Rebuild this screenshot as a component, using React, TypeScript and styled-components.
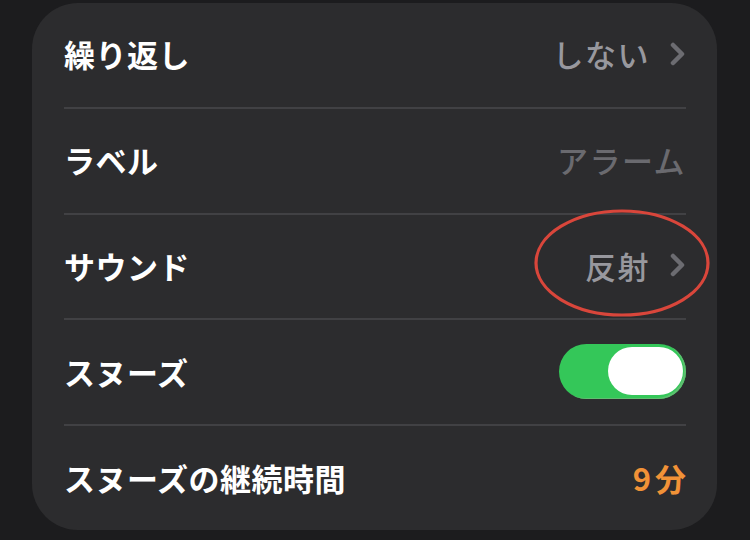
import React from 'react';
import styled, { createGlobalStyle } from 'styled-components';

// Page reset: dark grouped background, CJK font
const GlobalStyle = createGlobalStyle`
  html, body {
    margin: 0;
    padding: 0;
    background: #1c1c1e;
  }
  body {
    font-family: "Noto Sans CJK JP", "Noto Sans", sans-serif;
    -webkit-font-smoothing: antialiased;
  }
`;

const Page = styled.div`
  width: 750px;
  height: 540px;
  box-sizing: border-box;
  padding: 3px 33px 0 32px;
  overflow: hidden;
`;

const Card = styled.div`
  height: 527px;
  background: #2c2c2e;
  border-radius: 46px;
  padding: 0 31px 0 32px;
  display: flex;
  flex-direction: column;
`;

const Row = styled.div`
  position: relative;
  flex: 1;
  display: flex;
  align-items: center;
  justify-content: space-between;
  border-bottom: 2px solid #414144;
  padding-bottom: 2px;

  &:last-child {
    border-bottom: none;
  }
`;

const Label = styled.span`
  color: #ffffff;
  font-size: 31px;
  font-weight: 600;
  letter-spacing: 0.5px;
`;

const Detail = styled.div`
  display: flex;
  align-items: center;
  gap: 20px;
`;

const Value = styled.span<{ $tone?: 'normal' | 'dim' | 'accent' }>`
  font-size: 31px;
  font-weight: ${(p) => (p.$tone === 'accent' ? 600 : 500)};
  letter-spacing: ${(p) => (p.$tone === 'accent' ? '4px' : '1.5px')};
  margin-right: ${(p) => (p.$tone === 'accent' ? '-4px' : '0')};
  color: ${(p) =>
    p.$tone === 'dim' ? '#6a6a6f' : p.$tone === 'accent' ? '#f19237' : '#98989e'};
`;

const Chevron = () => (
  <svg width="16" height="24" viewBox="0 0 16 24">
    <polyline
      points="3,3 12,12 3,21"
      fill="none"
      stroke="#6c6c71"
      strokeWidth="4.5"
      strokeLinecap="round"
      strokeLinejoin="round"
    />
  </svg>
);

const Toggle = styled.div`
  width: 127px;
  height: 55px;
  box-sizing: border-box;
  border-radius: 28px;
  background: #34c759;
  box-shadow: inset -2px -1px 0 #5fbf70;
  display: flex;
  justify-content: flex-end;
  align-items: center;
  padding: 0 3px;
`;

const Knob = styled.div`
  width: 75px;
  height: 48px;
  border-radius: 24px;
  background: #ffffff;
`;

// hand-drawn red annotation circled around the sound value
const Annotation = styled.svg`
  position: absolute;
  right: -25px;
  top: -7px;
  pointer-events: none;
`;

export default function App() {
  return (
    <>
      <GlobalStyle />
      <Page>
        <Card>
          <Row>
            <Label>繰り返し</Label>
            <Detail>
              <Value>しない</Value>
              <Chevron />
            </Detail>
          </Row>
          <Row>
            <Label>ラベル</Label>
            <Value $tone="dim">アラーム</Value>
          </Row>
          <Row>
            <Label>サウンド</Label>
            <Detail>
              <Value>反射</Value>
              <Chevron />
            </Detail>
            <Annotation width="178" height="110" viewBox="0 0 178 110">
              <ellipse cx="89" cy="55" rx="86" ry="52" fill="none" stroke="#d9463b" strokeWidth="3.2" />
            </Annotation>
          </Row>
          <Row>
            <Label>スヌーズ</Label>
            <Toggle>
              <Knob />
            </Toggle>
          </Row>
          <Row>
            <Label>スヌーズの継続時間</Label>
            <Value $tone="accent">9分</Value>
          </Row>
        </Card>
      </Page>
    </>
  );
}
